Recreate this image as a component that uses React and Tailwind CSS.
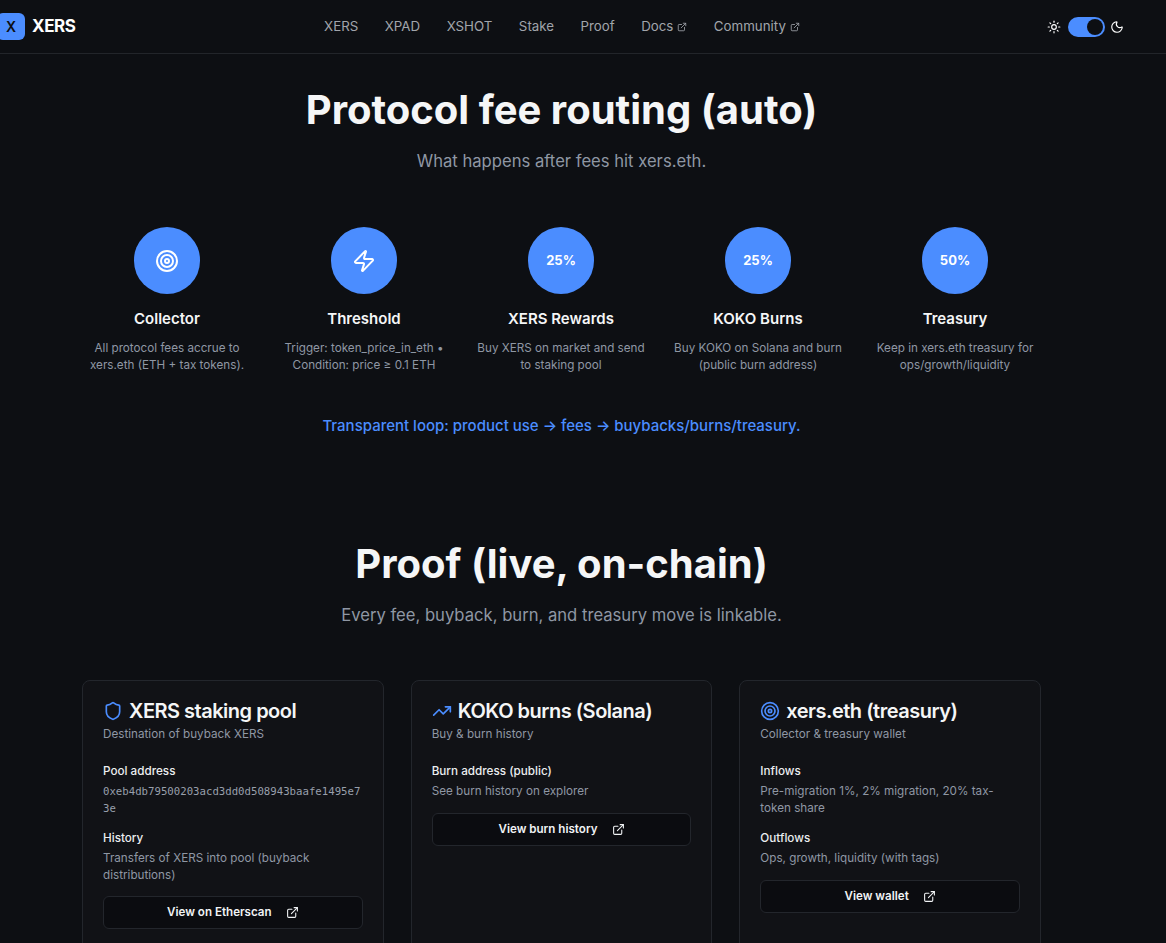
import { ExternalLink, Moon, Shield, Sun, Target, TrendingUp, Zap } from "lucide-react";

const navLinks = [
  { label: "XERS" },
  { label: "XPAD" },
  { label: "XSHOT" },
  { label: "Stake" },
  { label: "Proof" },
  { label: "Docs", external: true },
  { label: "Community", external: true },
];

const steps = [
  { icon: <Target size={24} />, title: "Collector", lines: ["All protocol fees accrue to", "xers.eth (ETH + tax tokens)."] },
  { icon: <Zap size={24} />, title: "Threshold", lines: ["Trigger: token_price_in_eth •", "Condition: price ≥ 0.1 ETH"] },
  { pct: "25%", title: "XERS Rewards", lines: ["Buy XERS on market and send", "to staking pool"] },
  { pct: "25%", title: "KOKO Burns", lines: ["Buy KOKO on Solana and burn", "(public burn address)"] },
  { pct: "50%", title: "Treasury", lines: ["Keep in xers.eth treasury for", "ops/growth/liquidity"] },
];

function CardButton({ children }) {
  return (
    <button className="flex h-[33px] w-full items-center justify-center gap-[14px] rounded-md border border-[#23262c] bg-[#0b0c10] text-[11.6px] font-semibold text-[#f1f3f5]">
      {children}
      <ExternalLink size={13} />
    </button>
  );
}

function Card({ icon, title, subtitle, children }) {
  return (
    <div className="h-[300px] rounded-lg border border-[#23262c] bg-[#111216] px-5 pt-[17px]">
      <h3 className="flex h-[26px] items-center gap-[6px] text-xl leading-[26px] font-semibold tracking-[-0.5px] text-[#f5f6f7]">
        <span className="text-[#4b8dff]">{icon}</span>
        {title}
      </h3>
      <p className="mt-[2px] text-[11.7px] leading-[17px] text-[#8f97a4]">{subtitle}</p>
      {children}
    </div>
  );
}

function Label({ children, className = "" }) {
  return <div className={`text-[11.7px] leading-[17px] font-medium text-[#eceef0] ${className}`}>{children}</div>;
}

function Text({ children }) {
  return <p className="mt-[3px] text-[11.7px] leading-[17px] text-[#8f97a4]">{children}</p>;
}

export default function App() {
  return (
    <div className="h-[943px] w-[1166px] overflow-hidden bg-[#0d0f13] font-['Inter',sans-serif]">
      <header className="h-[54px] border-b border-[#22252a]">
        <div className="grid h-full w-[1124px] grid-cols-[1fr_auto_1fr] items-center">
          <div className="flex items-center gap-[7px]">
            <div className="-ml-[3px] flex h-[27px] w-[28px] items-center justify-center rounded-md bg-[#4b8dff] text-sm font-semibold text-[#0d0f13]">X</div>
            <span className="text-[17px] font-bold tracking-[-0.4px] text-white">XERS</span>
          </div>
          <nav className="flex items-center gap-[26.5px]">
            {navLinks.map((link) => (
              <a key={link.label} className="flex items-center gap-[4px] text-[13.3px] text-[#a1a5ab]">
                {link.label}
                {link.external && <ExternalLink size={10} />}
              </a>
            ))}
          </nav>
          <div className="flex items-center justify-end text-white">
            <Sun size={14} className="mr-[7px]" />
            <div className="mr-[5px] flex h-[20px] w-[37px] items-center justify-end rounded-full bg-[#4b8dff] pr-[2px]">
              <div className="h-[16px] w-[16px] rounded-full bg-[#0d0f13]" />
            </div>
            <Moon size={14} />
          </div>
        </div>
      </header>

      <main className="w-[1123px]">
        <h1 className="mt-9 text-center text-[40px] leading-10 font-bold text-[#f5f6f7]">Protocol fee routing (auto)</h1>
        <p className="mt-[17px] text-center text-[16.64px] leading-7 text-[#8f97a4]">What happens after fees hit xers.eth.</p>

        <div className="mt-[52px] ml-[84.5px] grid w-[953px] grid-cols-5 gap-8">
          {steps.map((step) => (
            <div key={step.title} className="flex flex-col items-center text-center">
              <div className="flex h-[67px] w-[66px] items-center justify-center rounded-full bg-[#4b8dff] text-[13px] font-bold text-white">
                {step.icon || step.pct}
              </div>
              <h4 className="mt-[13px] text-[15px] leading-6 font-semibold text-[#f5f6f7]">{step.title}</h4>
              <p className="mt-[9px] text-[11.7px] leading-[17px] whitespace-nowrap text-[#8f97a4]">
                {step.lines[0]}
                <br />
                {step.lines[1]}
              </p>
            </div>
          ))}
        </div>

        <p className="mt-10 text-center text-[15px] leading-6 font-medium text-[#4b8dff]">Transparent loop: product use → fees → buybacks/burns/treasury.</p>

        <h2 className="mt-[106px] text-center text-[40px] leading-10 font-bold text-[#f5f6f7]">Proof (live, on-chain)</h2>
        <p className="mt-[17px] text-center text-[16.64px] leading-7 text-[#8f97a4]">Every fee, buyback, burn, and treasury move is linkable.</p>

        <div className="mx-auto mt-[51px] grid w-[959px] grid-cols-3 gap-[27px]">
          <Card icon={<Shield size={20} />} title="XERS staking pool" subtitle="Destination of buyback XERS">
            <Label className="mt-5">Pool address</Label>
            <p className="mt-[3px] font-['DejaVu_Sans_Mono',monospace] text-[10.7px] leading-[17px] break-all text-[#989fab]">0xeb4db79500203acd3dd0d508943baafe1495e73e</p>
            <Label className="mt-[13px]">History</Label>
            <Text>Transfers of XERS into pool (buyback distributions)</Text>
            <div className="mt-3">
              <CardButton>View on Etherscan</CardButton>
            </div>
          </Card>
          <Card icon={<TrendingUp size={20} />} title="KOKO burns (Solana)" subtitle="Buy & burn history">
            <Label className="mt-5">Burn address (public)</Label>
            <Text>See burn history on explorer</Text>
            <div className="mt-[13px]">
              <CardButton>View burn history</CardButton>
            </div>
          </Card>
          <Card icon={<Target size={20} />} title="xers.eth (treasury)" subtitle="Collector & treasury wallet">
            <Label className="mt-5">Inflows</Label>
            <Text>Pre-migration 1%, 2% migration, 20% tax-token share</Text>
            <Label className="mt-[13px]">Outflows</Label>
            <Text>Ops, growth, liquidity (with tags)</Text>
            <div className="mt-[13px]">
              <CardButton>View wallet</CardButton>
            </div>
          </Card>
        </div>
      </main>
    </div>
  );
}
